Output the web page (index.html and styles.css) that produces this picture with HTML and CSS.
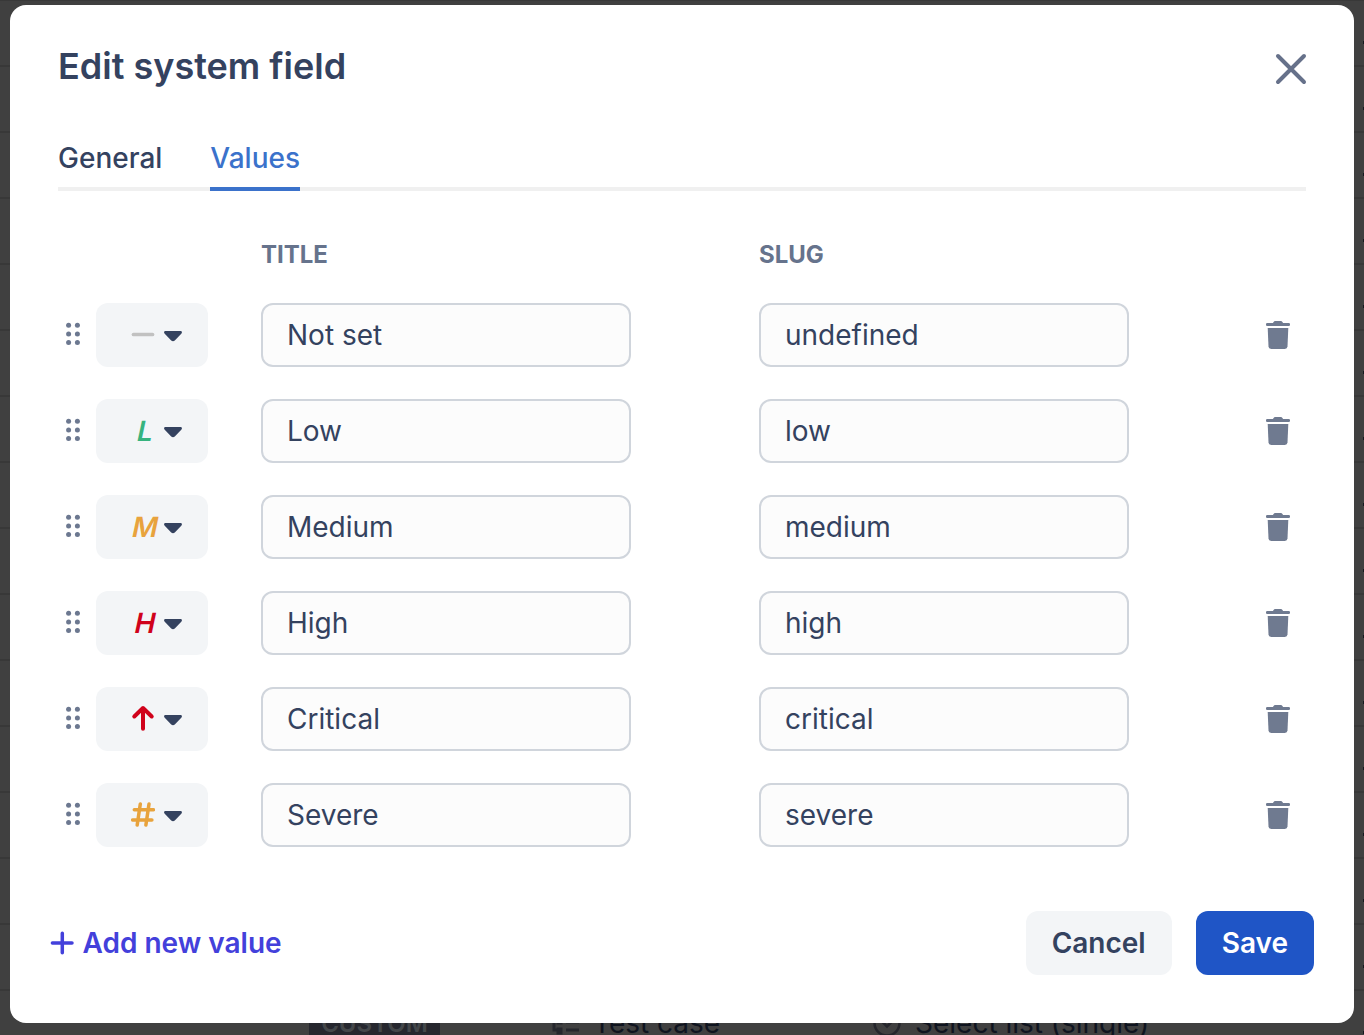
FILE: index.html
```html
<!DOCTYPE html>
<html lang="en">
<head>
<meta charset="utf-8">
<title>Edit system field</title>
<link rel="stylesheet" href="styles.css">
</head>
<body>
<svg class="sprite" aria-hidden="true">
  <symbol id="grip" viewBox="0 0 16 24">
    <circle cx="3.6" cy="3.2" r="2.5"/><circle cx="12.4" cy="3.2" r="2.5"/>
    <circle cx="3.6" cy="11.9" r="2.5"/><circle cx="12.4" cy="11.9" r="2.5"/>
    <circle cx="3.6" cy="20.6" r="2.5"/><circle cx="12.4" cy="20.6" r="2.5"/>
  </symbol>
  <symbol id="caret" viewBox="0 0 18 12">
    <path d="M1.5 0H16.5C17.9 0 18.4 1.5 17.5 2.4L10.8 9.5C9.7 10.6 8.3 10.6 7.2 9.5L0.5 2.4C-0.4 1.5 0.1 0 1.5 0Z"/>
  </symbol>
  <symbol id="trash" viewBox="0 0 24 28">
    <path d="M1.2 2H6.9L7.8 .7Q8.2 0 9 0H15Q15.8 0 16.2 .7L17.1 2H22.8Q24 2 24 3.2V4Q24 5 22.8 5H1.2Q0 5 0 4V3.2Q0 2 1.2 2Z"/>
    <path d="M1.7 7H22.3L21.5 25.6Q21.3 28 18.8 28H5.2Q2.7 28 2.5 25.6Z"/>
  </symbol>
</svg>

<div class="fields">
  <div class="field"></div><div class="field"></div><div class="field"></div><div class="field"></div>
  <div class="field"></div><div class="field"></div><div class="field"></div><div class="field"></div>
  <div class="field"></div><div class="field"></div><div class="field"></div><div class="field"></div>
  <div class="field"></div><div class="field"></div><div class="field"></div>
  <div class="field">
    <span class="tag">CUSTOM</span>
    <span class="scope">
      <svg width="28" height="28" viewBox="0 0 28 28" fill="none" stroke="currentColor" stroke-width="3"><path d="M3 2V21H8M3 11H8M15 13H28M15 21H28"/><path d="M7 10H10V14H7ZM7 20H10V24H7Z"/></svg>
      Test case
    </span>
    <span class="kind">
      <svg width="28" height="28" viewBox="0 0 28 28" fill="none" stroke="currentColor" stroke-width="2.5"><circle cx="14" cy="14" r="12.5"/><path d="M8.5 12L14 17.5L19.5 12"/></svg>
      Select list (single)
    </span>
  </div>
</div>

<div class="modal" role="dialog">
  <header class="head">
    <h1>Edit system field</h1>
    <svg class="close" width="32" height="32" viewBox="0 0 32 32"><path d="M3 3L29 29M29 3L3 29"/></svg>
  </header>
  <nav class="tabs">
    <a class="tab">General</a>
    <a class="tab active">Values</a>
  </nav>
  <div class="labels"><span class="label title">TITLE</span><span class="label">SLUG</span></div>
  <div class="rows">
    <div class="row">
      <svg class="grip"><use href="#grip"/></svg>
      <button class="picker"><span class="mark"><svg width="24" height="28" viewBox="0 0 24 28"><path class="dash" d="M2.5 13.5H21.5"/></svg></span><svg class="caret"><use href="#caret"/></svg></button>
      <input class="title" value="Not set"><input value="undefined">
      <svg class="trash"><use href="#trash"/></svg>
    </div>
    <div class="row">
      <svg class="grip"><use href="#grip"/></svg>
      <button class="picker"><span class="mark letter low">L</span><svg class="caret"><use href="#caret"/></svg></button>
      <input class="title" value="Low"><input value="low">
      <svg class="trash"><use href="#trash"/></svg>
    </div>
    <div class="row">
      <svg class="grip"><use href="#grip"/></svg>
      <button class="picker"><span class="mark letter medium">M</span><svg class="caret"><use href="#caret"/></svg></button>
      <input class="title" value="Medium"><input value="medium">
      <svg class="trash"><use href="#trash"/></svg>
    </div>
    <div class="row">
      <svg class="grip"><use href="#grip"/></svg>
      <button class="picker"><span class="mark letter high">H</span><svg class="caret"><use href="#caret"/></svg></button>
      <input class="title" value="High"><input value="high">
      <svg class="trash"><use href="#trash"/></svg>
    </div>
    <div class="row">
      <svg class="grip"><use href="#grip"/></svg>
      <button class="picker"><span class="mark"><svg width="24" height="28" viewBox="0 0 24 28"><path class="arrow" d="M12 23.8V3.5M3.3 11.5L12 3L20.7 11.5"/></svg></span><svg class="caret"><use href="#caret"/></svg></button>
      <input class="title" value="Critical"><input value="critical">
      <svg class="trash"><use href="#trash"/></svg>
    </div>
    <div class="row">
      <svg class="grip"><use href="#grip"/></svg>
      <button class="picker"><span class="mark"><svg width="24" height="28" viewBox="0 0 24 28"><path class="hash" d="M9.3 3L6.2 24M18 3L14.9 24M3.3 8.7H22.5M1.7 18.9H20.9"/></svg></span><svg class="caret"><use href="#caret"/></svg></button>
      <input class="title" value="Severe"><input value="severe">
      <svg class="trash"><use href="#trash"/></svg>
    </div>
  </div>
  <footer class="foot">
    <a class="add"><svg width="24" height="24" viewBox="0 0 24 24"><path d="M12.3 2.2V21.8M2.4 12H22"/></svg>Add new value</a>
    <button class="btn">Cancel</button>
    <button class="btn primary">Save</button>
  </footer>
</div>
</body>
</html>
```
FILE: styles.css
```css
* { box-sizing: border-box; }
body {
  margin: 0;
  width: 1364px;
  height: 1035px;
  overflow: hidden;
  background: #404040;
  color: #34425f;
  font-family: Inter, "Liberation Sans", sans-serif;
  font-size: 28px;
}
button, input { font: inherit; color: inherit; margin: 0; }
.sprite { position: absolute; width: 0; height: 0; }

.fields { margin-top: -1px; border-top: 2px solid #383838; }
.field {
  display: grid;
  grid-template-columns: 242px 322px 1fr;
  align-items: center;
  height: 66px;
  padding-left: 309px;
  border-bottom: 2px solid #383838;
  color: #0f141f;
}
.field::after {
  content: "";
  grid-column: 4;
  width: 1px;
  height: 3px;
  margin-top: 18px;
  background: #15181f;
}
.tag {
  justify-self: start;
  width: 131px;
  padding: 5px 0 3px;
  background: #26272e;
  color: #44474a;
  font-size: 24px;
  font-weight: 600;
  line-height: 32px;
  text-align: center;
}
.scope, .kind { display: flex; align-items: center; gap: 14px; white-space: nowrap; }
.scope svg, .kind svg { color: #25262c; }

.modal {
  position: absolute;
  top: 5px;
  left: 10px;
  display: flex;
  flex-direction: column;
  width: 1344px;
  height: 1018px;
  padding: 32px 40px 48px 48px;
  border-radius: 16px;
  background: #fff;
}
.head { display: flex; justify-content: space-between; height: 60px; padding-right: 7px; }
h1 { margin: 0; font-size: 36px; font-weight: 600; line-height: 58px; }
.close { margin-top: 16px; fill: none; stroke: #66718a; stroke-width: 4; stroke-linecap: round; }

.tabs { display: flex; gap: 48px; height: 58px; margin: 36px 8px 0 0; box-shadow: inset 0 -4px #f0f0f0; }
.tab { height: 58px; font-weight: 500; line-height: 50px; }
.tab.active { color: #3b72cb; border-bottom: 4px solid #3b72cb; }

.labels { display: flex; height: 32px; margin-top: 48px; padding-left: 203px; }
.label { color: #66738c; font-size: 24px; font-weight: 650; line-height: 32px; }
.label.title { width: 498px; }

.rows { display: flex; flex-direction: column; gap: 32px; margin-top: 32px; }
.row { display: flex; align-items: center; height: 64px; }
.grip { width: 16px; height: 24px; margin: 0 15px 2px 7px; fill: #6c7890; }
.picker {
  display: flex;
  align-items: center;
  width: 112px;
  height: 64px;
  padding: 0 0 0 35px;
  border: 0;
  border-radius: 12px;
  background: #f3f5f7;
}
.mark { display: flex; justify-content: center; width: 24px; line-height: 28px; }
.mark.letter { padding-left: 5px; font-weight: 600; transform: skewX(-12deg); }
.mark svg { flex: none; fill: none; stroke-linecap: round; stroke-linejoin: round; }
.low { color: #36b37e; }
.medium { color: #e8a33d; }
.high { color: #d0021b; }
.dash { stroke: #c1c1c1; stroke-width: 3.7; }
.arrow { stroke: #d0021b; stroke-width: 4; }
.hash { stroke: #e8a33d; stroke-width: 3.5; }
.caret { flex: none; width: 18px; height: 12px; margin: 4px 0 0 9px; fill: #34425f; }
input {
  width: 370px;
  height: 64px;
  padding: 0 24px;
  border: 2px solid #d0d5dc;
  border-radius: 12px;
  background: #fcfcfc;
}
input.title { margin: 0 128px 0 53px; }
.trash { width: 24px; height: 28px; margin-left: 137px; fill: #6f7a90; }

.foot { display: flex; align-items: center; gap: 24px; margin-top: 64px; font-weight: 600; }
.add { display: flex; align-items: center; gap: 8.5px; margin: 0 auto 0 -8px; color: #4340db; }
.add svg { fill: none; stroke: currentColor; stroke-width: 3.5; stroke-linecap: round; }
.btn { height: 64px; padding: 0 26px; border: 0; border-radius: 12px; background: #f3f5f7; }
.btn.primary { background: #1f55c6; color: #fff; }
```
